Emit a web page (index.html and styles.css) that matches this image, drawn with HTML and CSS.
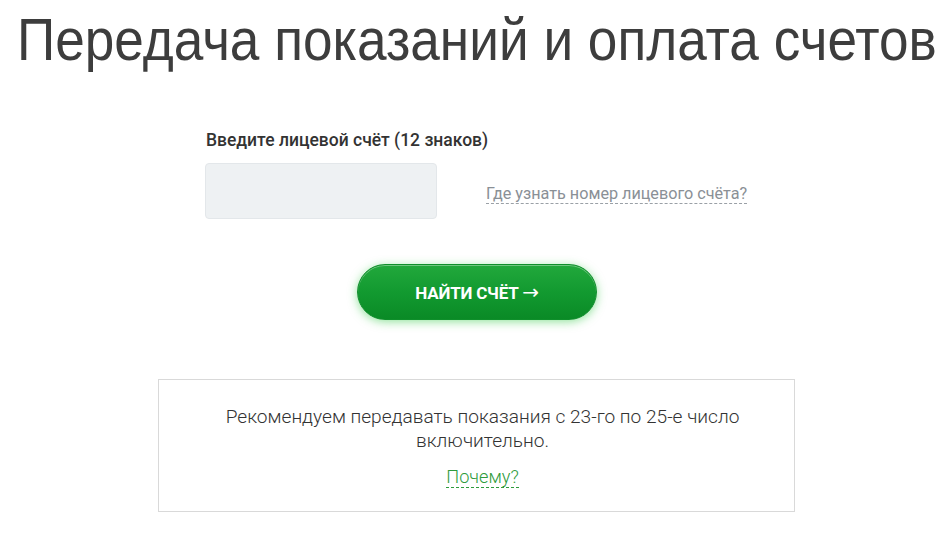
FILE: index.html
```html
<!DOCTYPE html>
<html>
<head>
    <title>Передача показаний</title>
    <link rel="stylesheet" href="styles.css">
</head>
<body>
    <h1 class="page-title">Передача показаний и оплата счетов</h1>

    <form class="account-form">
        <label class="field-label" for="account">Введите лицевой счёт (12 знаков)</label>
        <div class="field-row">
            <input type="text" id="account" class="account-input" maxlength="12">
            <a href="#" class="hint-link">Где узнать номер лицевого счёта?</a>
        </div>
        <div class="button-row">
            <button type="submit" class="find-button">НАЙТИ СЧЁТ <span class="arrow">&rarr;</span></button>
        </div>
    </form>

    <div class="notice">
        <p class="notice-text">Рекомендуем передавать показания с 23-го по 25-е число включительно.</p>
        <a href="#" class="why-link">Почему?</a>
    </div>
</body>
</html>
```

FILE: styles.css
```css
body {
    margin: 0;
    font-family: Roboto, "Noto Sans", sans-serif;
    color: #333;
    background: #fff;
}

.page-title {
    margin: 0;
    padding: 5px 0 0 17px;
    font-family: "Liberation Sans", Arial, sans-serif;
    font-weight: normal;
    font-size: 60px;
    line-height: 70px;
    color: #3d3d3d;
    white-space: nowrap;
    transform: scaleX(0.886);
    transform-origin: 17px 0;
}

.account-form {
    width: 560px;
    margin: 55px 0 0 206px;
}

.field-label {
    display: block;
    font-size: 17.5px;
    font-weight: 500;
    color: #333;
    line-height: 20px;
}

.field-row {
    display: flex;
    align-items: center;
    gap: 49px;
    margin-top: 13px;
}

.account-input {
    width: 232px;
    height: 56px;
    box-sizing: border-box;
    margin-left: -1px;
    background: #eef1f3;
    border: 1px solid #e3e7ea;
    border-radius: 4px;
    font-size: 18px;
    padding: 0 14px;
}

.hint-link {
    font-size: 16.2px;
    color: #8a9096;
    text-decoration: none;
    border-bottom: 1px dashed #9aa0a6;
    line-height: 18px;
    margin-top: 6px;
}

.button-row {
    margin: 45px 0 0 151px;
}

.find-button {
    width: 240px;
    height: 56px;
    border: 1px solid #0f8f2b;
    border-radius: 28px;
    background: linear-gradient(#22a83c, #129a30 50%, #0a8a26);
    color: #fff;
    font-family: Roboto, sans-serif;
    font-size: 17px;
    font-weight: bold;
    letter-spacing: -0.2px;
    box-shadow: 0 2px 10px rgba(40, 200, 60, 0.5), inset 0 1px 0 rgba(255, 255, 255, 0.35);
    cursor: pointer;
}

.arrow {
    font-family: "DejaVu Sans", sans-serif;
    font-weight: normal;
    font-size: 20px;
    line-height: 1;
}

.notice {
    width: 637px;
    box-sizing: border-box;
    margin: 59px 0 0 158px;
    border: 1px solid #d9d9d9;
    padding: 25px 40px 23px 52px;
    text-align: center;
}

.notice-text {
    margin: 0;
    font-size: 19.1px;
    font-weight: 300;
    line-height: 24px;
    color: #333;
}

.why-link {
    display: inline-block;
    margin-top: 13px;
    font-size: 18.2px;
    font-weight: 300;
    line-height: 21px;
    color: #2e9b3c;
    text-decoration: none;
    border-bottom: 1px dashed #2e9b3c;
}
```
